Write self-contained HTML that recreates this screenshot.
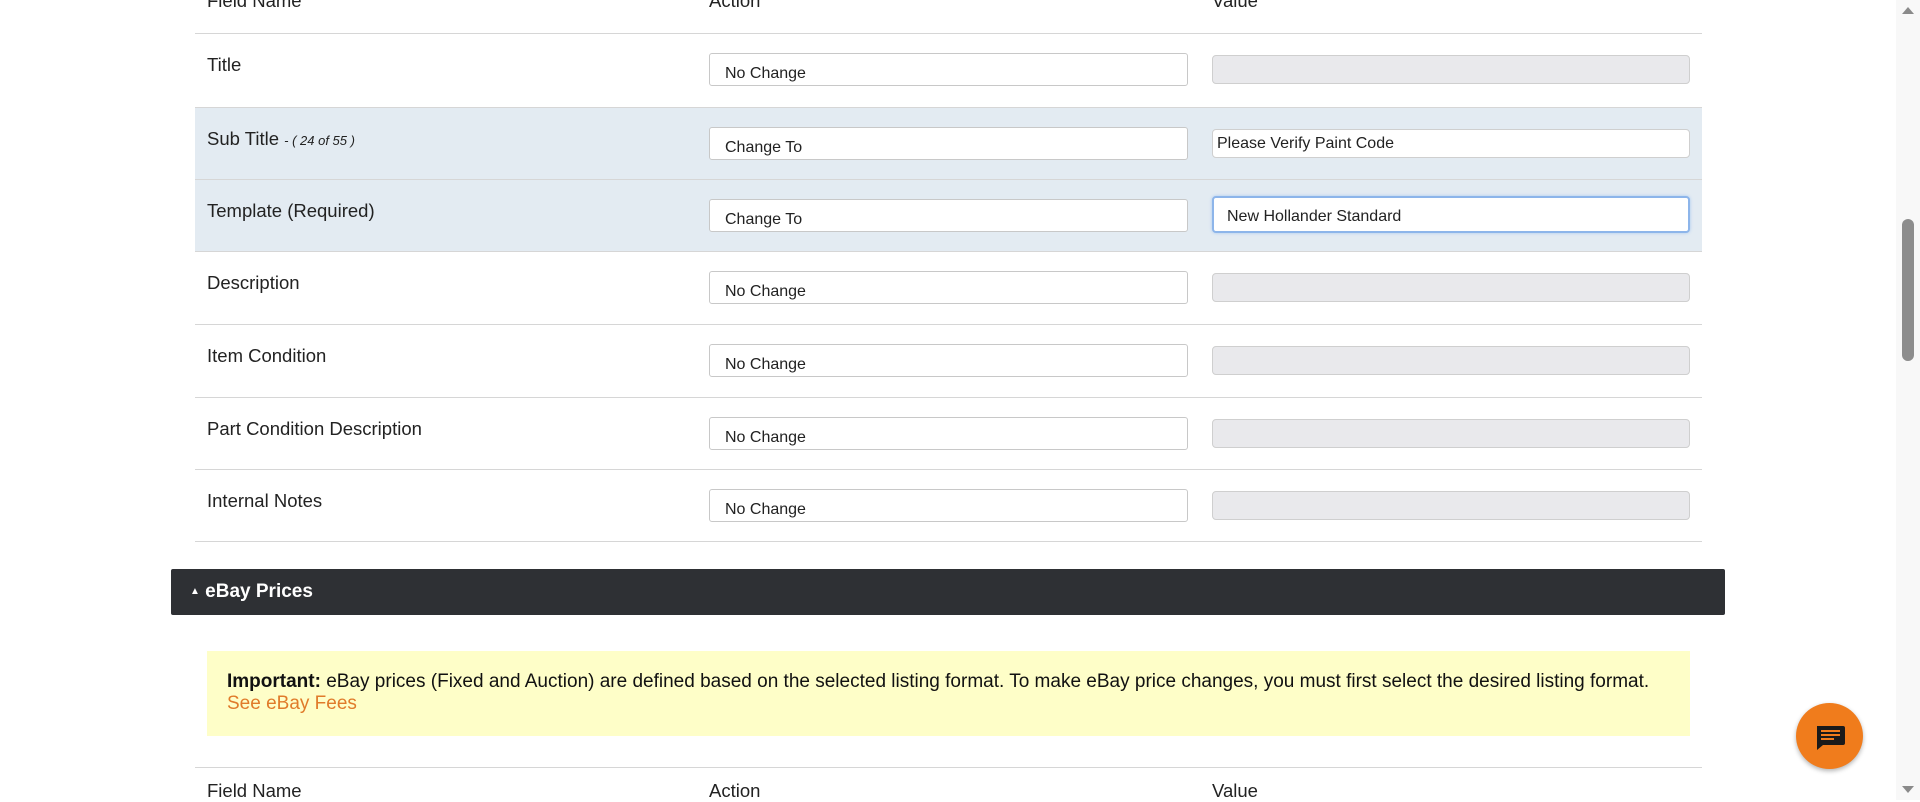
<!DOCTYPE html>
<html><head><style>
*{box-sizing:border-box;margin:0;padding:0}
body{width:1920px;height:800px;overflow:hidden;background:#fff;font-family:"Liberation Sans",Arial,sans-serif;color:#222;position:relative}
.abs{position:absolute}
.line{position:absolute;left:195px;width:1507px;height:1px;background:#d6d6d6}
.row{position:absolute;left:195px;width:1507px;height:73px}
.hl{background:#e3ebf2}
.lbl{position:absolute;left:12px;top:21px;font-size:18.5px;color:#222}
.sel{position:absolute;left:514px;top:20px;width:479px;height:33px;border:1px solid #c8c8c8;border-radius:3px;background:#fff;font-size:16px;padding:12px 0 0 15px;line-height:16px;color:#222}
.val{position:absolute;left:1017px;top:22px;width:478px;height:29px;border:1px solid #cfcfcf;border-radius:4px;background:#e9e9ec;font-size:16px;padding:5px 4px;line-height:17px}
.hdr{position:absolute;font-size:18.5px;color:#222}
</style></head><body>
<div class="hdr" style="left:207px;top:-10px">Field Name</div>
<div class="hdr" style="left:709px;top:-10px">Action</div>
<div class="hdr" style="left:1212px;top:-10px">Value</div>

<div class="row" style="top:33px"><div class="lbl">Title</div><div class="sel">No Change</div><div class="val"></div></div>
<div class="row hl" style="top:107px"><div class="lbl">Sub Title <i style="font-size:13px">- ( 24 of 55 )</i></div><div class="sel">Change To</div><div class="val" style="background:#fff">Please Verify Paint Code</div></div>
<div class="row hl" style="top:179px"><div class="lbl">Template (Required)</div><div class="sel">Change To</div><div class="val" style="background:#fff;top:17px;height:37px;border:2px solid #8db5ea;box-shadow:0 0 3px #a8c8f0;padding:10px 13px">New Hollander Standard</div></div>
<div class="row" style="top:251px"><div class="lbl">Description</div><div class="sel">No Change</div><div class="val"></div></div>
<div class="row" style="top:324px"><div class="lbl">Item Condition</div><div class="sel">No Change</div><div class="val"></div></div>
<div class="row" style="top:397px"><div class="lbl">Part Condition Description</div><div class="sel">No Change</div><div class="val"></div></div>
<div class="row" style="top:469px"><div class="lbl">Internal Notes</div><div class="sel">No Change</div><div class="val"></div></div>

<div class="line" style="top:33px"></div><div class="line" style="top:107px"></div><div class="line" style="top:179px"></div><div class="line" style="top:251px"></div><div class="line" style="top:324px"></div><div class="line" style="top:397px"></div><div class="line" style="top:469px"></div><div class="line" style="top:541px"></div>

<div class="abs" style="left:171px;top:569px;width:1554px;height:46px;background:#2e3034;border-radius:2px;color:#fff;font-weight:bold;font-size:19px;padding:12px 0 0 19px"><span style="font-size:10px;vertical-align:3px">▲</span> eBay Prices</div>

<div class="abs" style="left:207px;top:651px;width:1483px;height:85px;background:#fefec8;font-size:19px;padding:20px 20px;line-height:22px;color:#111;white-space:nowrap"><b>Important:</b> eBay prices (Fixed and Auction) are defined based on the selected listing format. To make eBay price changes, you must first select the desired listing format.<br><span style="color:#e07b2a">See eBay Fees</span></div>

<div class="line" style="top:767px"></div>
<div class="hdr" style="left:207px;top:780px">Field Name</div>
<div class="hdr" style="left:709px;top:780px">Action</div>
<div class="hdr" style="left:1212px;top:780px">Value</div>

<div class="abs" style="left:1796px;top:703px;width:67px;height:66px;border-radius:50%;background:#f07c1c;box-shadow:0 2px 5px rgba(0,0,0,.3)">
<svg width="67" height="66" viewBox="0 0 67 66"><path d="M21 23h26a2 2 0 0 1 2 2v15a2 2 0 0 1-2 2H27l-6 5z" fill="#1a1a1a"/><rect x="25" y="27" width="19" height="2" fill="#f07c1c"/><rect x="25" y="31" width="19" height="2" fill="#f07c1c"/><rect x="25" y="35" width="13" height="2" fill="#f07c1c"/></svg></div>

<div class="abs" style="left:1896px;top:0;width:24px;height:800px;background:#f8f8f8"></div>
<svg class="abs" style="left:1896px;top:0" width="24" height="800"><path d="M6 14L12 7L18 14Z" fill="#8a8a8a"/><rect x="6" y="219" width="12" height="142" rx="6" fill="#8d8d8d"/><path d="M6 786L12 793L18 786Z" fill="#8a8a8a"/></svg>
</body></html>
